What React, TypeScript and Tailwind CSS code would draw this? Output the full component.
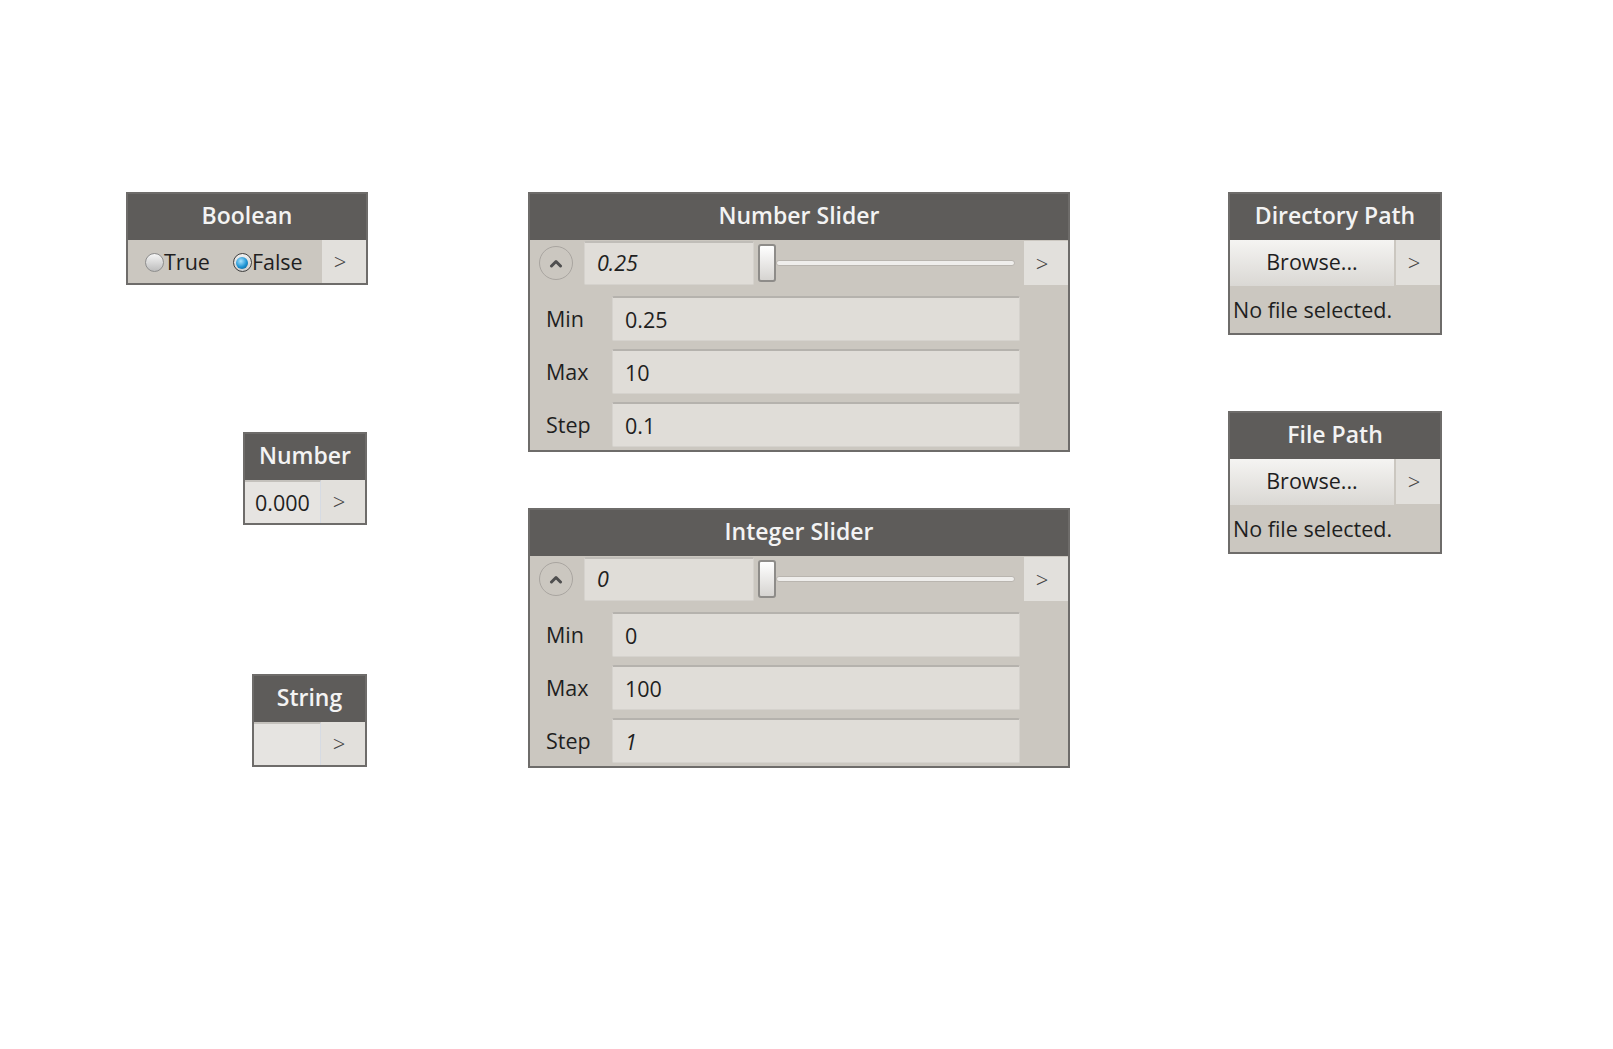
import React from 'react';

const Header = ({ title }: { title: string }) => (
  <div className="h-[46px] pb-[3px] bg-[#5e5c5a] flex items-center justify-center text-[23px] font-semibold text-[#f3f3f3] leading-none">
    {title}
  </div>
);

const Arrow = ({ className = '' }: { className?: string }) => (
  <div className={`w-[44px] pr-[8px] bg-[#e2e0dc] flex items-center justify-center text-[22px] font-light text-[#444] ${className}`}>
    &gt;
  </div>
);

const Radio = ({ checked }: { checked: boolean }) => (
  <span
    className={`inline-flex shrink-0 w-[19px] h-[19px] rounded-full items-center justify-center border ${
      checked
        ? 'border-[#3f3f3f] bg-linear-to-b from-[#f0f0f0] to-[#cfcfcf]'
        : 'border-[#8d8d8d] bg-linear-to-b from-[#f6f6f6] to-[#bdbdbd]'
    }`}
  >
    {checked && (
      <span className="w-[12px] h-[12px] rounded-full bg-[radial-gradient(circle_at_40%_35%,#a8e4ff,#1d93d4_55%,#0a557f)]" />
    )}
  </span>
);

const UpButton = () => (
  <div className="w-[34px] h-[34px] rounded-full border-[1.5px] border-[#a9a5a0] flex items-center justify-center">
    <svg width="14" height="9" viewBox="0 0 14 9">
      <polyline points="2.5,7 7,2.5 11.5,7" fill="none" stroke="#4f4f4f" strokeWidth="3" strokeLinecap="round" strokeLinejoin="round" />
    </svg>
  </div>
);

const Field = ({ label, value, italic }: { label: string; value: string; italic?: boolean }) => (
  <div className="flex items-center">
    <div className="w-[82px] pl-[16px] pt-[2px] text-[21.5px] text-[#1f1f1f]">{label}</div>
    <div
      className={`w-[408px] h-[45px] flex items-center pl-[12px] pt-[2px] bg-[#e0ddd8] border border-[#d5d2cd] border-t-2 border-t-[#b5b2ad] rounded-[2px] text-[21.5px] text-[#1f1f1f] ${
        italic ? 'italic' : ''
      }`}
    >
      {value}
    </div>
  </div>
);

const SliderNode = ({
  title,
  value,
  min,
  max,
  step,
  stepItalic,
  className,
}: {
  title: string;
  value: string;
  min: string;
  max: string;
  step: string;
  stepItalic?: boolean;
  className: string;
}) => (
  <div className={`absolute w-[542px] border-2 border-[#6e6c6a] bg-[#cbc7c0] ${className}`}>
    <Header title={title} />
    {/* value + slider row */}
    <div className="flex items-center h-[46px]">
      <div className="ml-[9px]">
        <UpButton />
      </div>
      <div className="ml-[11px] w-[170px] h-[44px] flex items-center pl-[12px] bg-[#e0ddd8] border border-[#d5d2cd] border-t-2 border-t-[#c0bdb8] rounded-[2px] italic text-[21.5px] text-[#1f1f1f]">
        {value}
      </div>
      <div className="ml-[4px] flex-1 flex items-center">
        <div className="w-[18px] h-[38px] rounded-[3px] border-2 border-[#8e8c89] bg-linear-to-b from-white to-[#d6d4d1]" />
        <div className="flex-1 h-[6px] rounded-full bg-[#efeeec] border border-[#b9b5af]" />
      </div>
      <Arrow className="ml-[9px] h-[44px] self-start mt-px" />
    </div>
    <div className="flex flex-col gap-[8px] pt-[10px] pb-[3px]">
      <Field label="Min" value={min} />
      <Field label="Max" value={max} />
      <Field label="Step" value={step} italic={stepItalic} />
    </div>
  </div>
);

const PathNode = ({ title, className }: { title: string; className: string }) => (
  <div className={`absolute w-[214px] border-2 border-[#6e6c6a] bg-[#cbc7c0] ${className}`}>
    <Header title={title} />
    <div className="flex h-[46px] gap-[2px]">
      <div className="flex-1 flex items-center justify-center pb-[2px] bg-linear-to-b from-[#f5f4f2] to-[#dad8d4] text-[21.5px] text-[#1f1f1f]">
        Browse...
      </div>
      <Arrow className="h-[45px] w-[43px]" />
    </div>
    <div className="h-[47px] flex items-center pl-[3px] pt-[2px] text-[21.5px] text-[#1f1f1f]">No file selected.</div>
  </div>
);

export default function App() {
  return (
    <div className="relative w-[1613px] h-[1049px] bg-white overflow-hidden font-['Open_Sans',sans-serif]">
      {/* Boolean */}
      <div className="absolute left-[126px] top-[192px] w-[242px] border-2 border-[#6e6c6a] bg-[#cbc7c0]">
        <Header title="Boolean" />
        <div className="flex h-[43px]">
          <div className="flex-1 flex items-center pl-[17px] pt-[2px] text-[21.5px] text-[#1f1f1f]">
            <Radio checked={false} />
            <span>True</span>
            <span className="ml-[23px]" />
            <Radio checked />
            <span>False</span>
          </div>
          <Arrow className="h-full" />
        </div>
      </div>

      {/* Number */}
      <div className="absolute left-[243px] top-[432px] w-[124px] border-2 border-[#6e6c6a] bg-[#cbc7c0]">
        <Header title="Number" />
        <div className="flex h-[43px]">
          <div className="flex-1 flex items-center pl-[10px] pt-[2px] bg-[#e6e4e1] border-t-2 border-t-[#c4c1bc] border-r border-r-[#d6dbe3] text-[21.5px] text-[#1f1f1f]">
            0.000
          </div>
          <Arrow className="h-full w-[43px]" />
        </div>
      </div>

      {/* String */}
      <div className="absolute left-[252px] top-[674px] w-[115px] border-2 border-[#6e6c6a] bg-[#cbc7c0]">
        <Header title="String" />
        <div className="flex h-[43px]">
          <div className="flex-1 bg-[#e6e4e1] border-t-2 border-t-[#c4c1bc] border-r border-r-[#d6dbe3]" />
          <Arrow className="h-full w-[43px]" />
        </div>
      </div>

      <SliderNode title="Number Slider" value="0.25" min="0.25" max="10" step="0.1" className="left-[528px] top-[192px]" />
      <SliderNode title="Integer Slider" value="0" min="0" max="100" step="1" stepItalic className="left-[528px] top-[508px]" />

      <PathNode title="Directory Path" className="left-[1228px] top-[192px]" />
      <PathNode title="File Path" className="left-[1228px] top-[411px]" />
    </div>
  );
}
